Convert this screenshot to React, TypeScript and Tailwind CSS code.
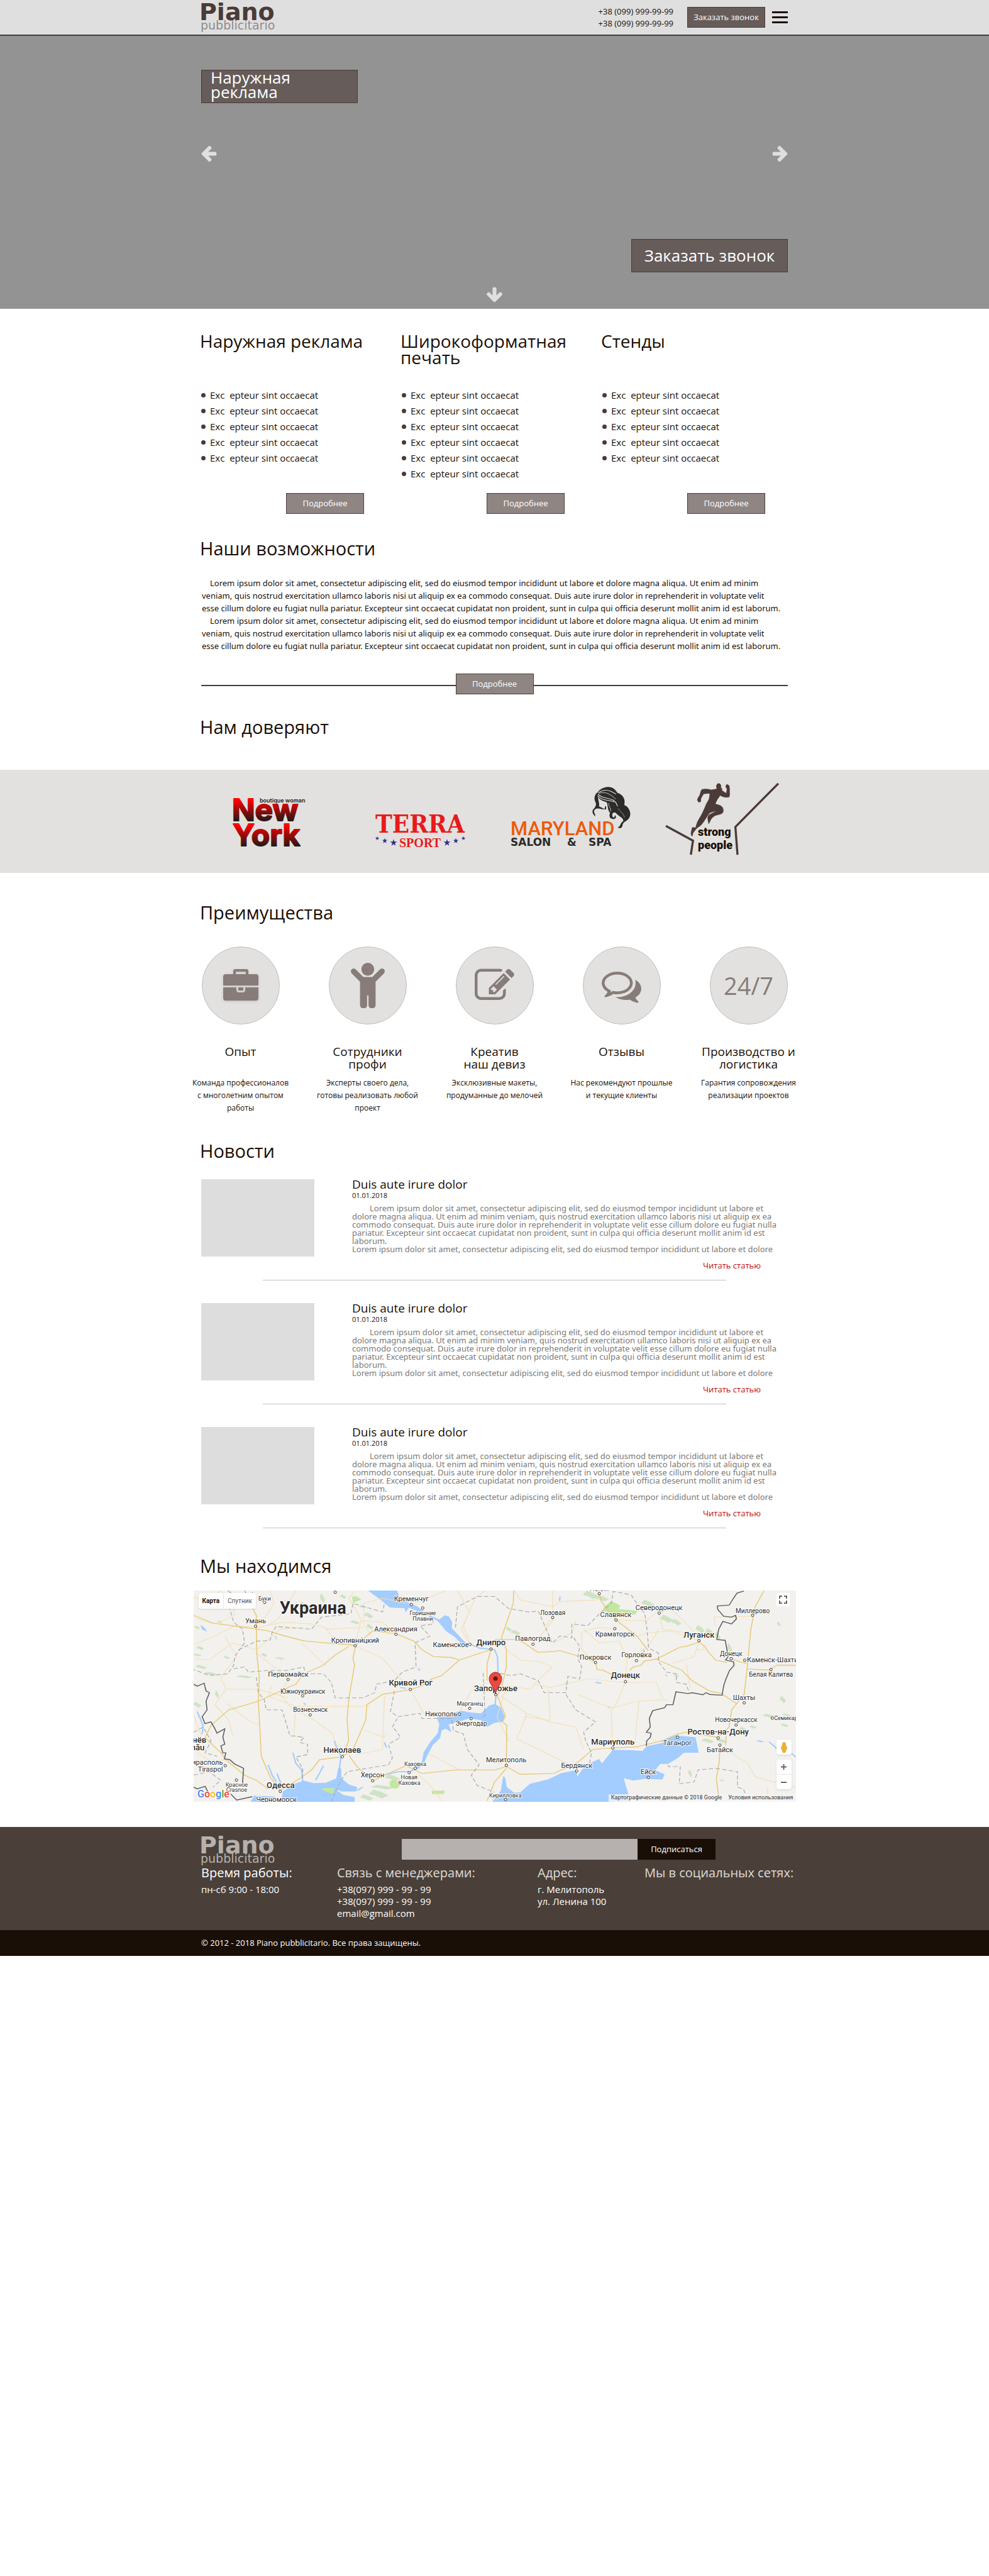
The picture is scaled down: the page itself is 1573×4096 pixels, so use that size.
import React from "react";
import { FaChild } from "react-icons/fa";

const wrap = "mx-auto w-full max-w-[933px]";
const sectionTitle = "-ml-0.5 text-[29px] leading-9";
const darkButton =
  "flex items-center justify-center border border-[#4b3a37] bg-[#665c5a] text-white whitespace-nowrap";

function PianoLogo({ main, sub }: { main: string; sub: string }) {
  return (
    <svg
      width="128"
      height="46"
      viewBox="0 0 128 46"
      role="img"
      aria-label="Piano pubblicitario"
      className="shrink-0 overflow-visible"
      fontFamily='"DejaVu Sans", sans-serif'
    >
      <text x="-3" y="27" fontSize="38" fontWeight="700" fill={main}>
        Piano
      </text>
      <text x="-1" y="42" fontSize="19" fill={sub}>
        pubblicitario
      </text>
    </svg>
  );
}

function Header() {
  return (
    <header className="border-b-2 border-[#4b3a37] bg-[#dfdfdf]">
      <div className={`${wrap} flex h-[55px] items-center justify-between`}>
        <a href="#top">
          <PianoLogo main="#4b3a37" sub="#918b8a" />
        </a>
        <div className="flex items-center">
          <div className="mr-[22px] flex flex-col text-[13px] leading-[19px]">
            <a href="tel:+380999999999">+38 (099) 999-99-99</a>
            <a href="tel:+380999999999">+38 (099) 999-99-99</a>
          </div>
          <button type="button" className={`${darkButton} mr-[11px] h-[33px] w-[124px] text-[13px]`}>
            Заказать звонок
          </button>
          <button type="button" aria-label="Меню" className="flex w-[25px] flex-col gap-[5px]">
            <span className="h-[3px] bg-[#1a0f07]" />
            <span className="h-[3px] bg-[#1a0f07]" />
            <span className="h-[3px] bg-[#1a0f07]" />
          </button>
        </div>
      </div>
    </header>
  );
}

function ArrowIcon({ className = "" }: { className?: string }) {
  return (
    <svg width="25" height="25" viewBox="149 181 1558 1558" fill="currentColor" className={className}>
      <path d="M1664 896v128q0 53-32.500 90.500t-84.500 37.500h-704l293 294q38 36 38 90t-38 90l-75 76q-37 37-90 37-52 0-91-37l-651-652q-37-37-37-90 0-52 37-91l651-650q38-38 91-38 52 0 90 38l75 74q38 38 38 91t-38 91l-293 293h704q52 0 84.500 37.500t32.500 90.500z" />
    </svg>
  );
}

function Hero() {
  return (
    <section className="bg-[#939393] pt-[54px] pb-[10px]">
      <div className={`${wrap} flex flex-col`}>
        <h1 className="h-[53px] w-[249px] border border-[#4b3a37] bg-[#665c5a] pl-[14px] text-[26px] leading-[23px] text-white">
          Наружная
          <br />
          реклама
        </h1>
        <div className="mt-[68px] flex justify-between text-[#dfdfdf]">
          <button type="button" aria-label="Предыдущий слайд">
            <ArrowIcon />
          </button>
          <button type="button" aria-label="Следующий слайд">
            <ArrowIcon className="rotate-180" />
          </button>
        </div>
        <button type="button" className={`${darkButton} mt-[123px] h-[53px] w-[249px] self-end text-[26px]`}>
          Заказать звонок
        </button>
        <a href="#offers" aria-label="Вниз" className="mt-[23px] self-center text-[#dfdfdf]">
          <ArrowIcon className="-rotate-90" />
        </a>
      </div>
    </section>
  );
}

function MoreButton({ className = "" }: { className?: string }) {
  return (
    <button
      type="button"
      className={`h-[33px] w-[124px] shrink-0 border border-[#4b3a37] bg-[#8f8683] text-[13px] text-white ${className}`}
    >
      Подробнее
    </button>
  );
}

const offers = [
  { title: "Наружная реклама", count: 5 },
  { title: "Широкоформатная печать", count: 6 },
  { title: "Стенды", count: 5 },
];

function Offers() {
  return (
    <section id="offers" className={`${wrap} grid grid-cols-[319px_319px_1fr] pt-[38px]`}>
      {offers.map((offer) => (
        <div key={offer.title} className="flex flex-col">
          <h2 className="-ml-0.5 min-h-[87px] w-[290px] text-[28px] leading-[26px]">{offer.title}</h2>
          <ul className="mb-[18px]">
            {Array.from({ length: offer.count }, (_, i) => (
              <li key={i} className="flex items-center text-[15px] leading-[25px] whitespace-pre">
                <span className="mr-[7px] size-[7px] rounded-full bg-[#4b3a37]" />
                Exc{"  "}epteur sint occaecat
              </li>
            ))}
          </ul>
          <MoreButton className="mt-auto ml-[135px]" />
        </div>
      ))}
    </section>
  );
}

function LoremParagraph() {
  return (
    <p className="indent-[13px]">
      Lorem ipsum dolor sit amet, consectetur adipiscing elit, sed do eiusmod tempor incididunt ut labore et dolore
      magna aliqua. Ut enim ad minim
      <br />
      veniam, quis nostrud exercitation ullamco laboris nisi ut aliquip ex ea commodo consequat. Duis aute irure dolor
      in reprehenderit in voluptate velit
      <br />
      esse cillum dolore eu fugiat nulla pariatur. Excepteur sint occaecat cupidatat non proident, sunt in culpa qui
      officia deserunt mollit anim id est laborum.
    </p>
  );
}

function Abilities() {
  return (
    <section className={`${wrap} pt-[37px]`}>
      <h2 className={sectionTitle}>Наши возможности</h2>
      <div className="mt-[27px] pl-px font-['Noto_Sans',sans-serif] text-[13px] leading-5 whitespace-nowrap">
        <LoremParagraph />
        <LoremParagraph />
      </div>
      <div className="mt-[34px] flex items-center">
        <span className="mt-1 h-0.5 flex-1 bg-[#4b3a37]" />
        <MoreButton />
        <span className="mt-1 h-0.5 flex-1 bg-[#4b3a37]" />
      </div>
    </section>
  );
}

const star = "M0-10 2.3-3.1 9.5-3.1 3.7 1.2 5.9 8.1 0 3.9-5.9 8.1-3.7 1.2-9.5-3.1-2.3-3.1Z";

function NewYorkLogo() {
  return (
    <svg
      width="122"
      height="116"
      viewBox="0 0 122 116"
      role="img"
      aria-label="New York boutique woman"
      className="overflow-visible"
    >
      <defs>
        <linearGradient id="ny1" gradientUnits="userSpaceOnUse" x1="0" y1="27" x2="0" y2="61">
          <stop offset="0" stopColor="#ff0000" />
          <stop offset="1" stopColor="#211917" />
        </linearGradient>
        <linearGradient id="ny2" gradientUnits="userSpaceOnUse" x1="0" y1="67" x2="0" y2="101">
          <stop offset="0" stopColor="#ff0000" />
          <stop offset="1" stopColor="#211917" />
        </linearGradient>
      </defs>
      <g fontFamily="Inter, sans-serif" fontWeight="700" fontSize="48" strokeWidth="2" strokeLinejoin="round">
        <text x="0" y="60" fill="url(#ny1)" stroke="url(#ny1)">
          New
        </text>
        <text x="1" y="100" fill="url(#ny2)" stroke="url(#ny2)">
          York
        </text>
      </g>
      <text x="44" y="31" fontFamily="Inter, sans-serif" fontWeight="600" fontSize="9" fill="#211917">
        boutique woman
      </text>
    </svg>
  );
}

const terraStars = [
  [3, 88, 0.35],
  [15, 92, 0.45],
  [29, 95, 0.58],
  [114, 95, 0.58],
  [128, 92, 0.45],
  [140, 88, 0.35],
];

function TerraLogo() {
  return (
    <svg
      width="145"
      height="116"
      viewBox="0 0 145 116"
      role="img"
      aria-label="Terra Sport"
      className="overflow-visible"
    >
      <text
        x="0"
        y="79"
        fontFamily='"DejaVu Serif Condensed", "DejaVu Serif", serif'
        fontWeight="700"
        fontSize="40"
        fill="#e81a1a"
      >
        TERRA
      </text>
      <text x="38" y="102" fontFamily='"Liberation Serif", serif' fontWeight="700" fontSize="20" fill="#e81a1a">
        SPORT
      </text>
      {terraStars.map(([x, y, s]) => (
        <path key={x} d={star} fill="#352b8c" transform={`translate(${x} ${y}) scale(${s})`} />
      ))}
    </svg>
  );
}

function MarylandLogo() {
  return (
    <svg
      width="191"
      height="116"
      viewBox="0 0 191 116"
      role="img"
      aria-label="Maryland Salon & Spa"
      className="overflow-visible"
    >
      <text x="0" y="83" fontFamily="Roboto, sans-serif" fontWeight="500" fontSize="31" fill="#ee5a0a">
        MARYLAND
      </text>
      <g fontFamily='"DejaVu Sans", sans-serif' fontSize="17" fontWeight="700" fill="#2c2b29">
        <text x="0" y="100">
          SALON
        </text>
        <text x="90" y="100">
          &amp;
        </text>
        <text x="124" y="100">
          SPA
        </text>
      </g>
      <g transform="translate(-9 -8.8) scale(.2821 .2731)">
        <path
          fill="#2c2b29"
          d="M520 92C530 70 560 54 585 55c30 2 40 20 50 35 30 10 46 35 38 70 28 10 43 50 28 75-10 20-36 20-38 45-3 17-18 18-27 11 19-6 12-25 31-36 5-20-28-30-43-50-16-4-22 8-17 22 5 12 14 4 13-8 13 9 5 26-12 23-18-2-22-17-15-36-15-16-11-40-18-60-20-11-40-11-51-36 4 30 11 45 6 58l32 16 4-16 5-1v18c-20 5-40-8-56-3-15 5-15 20-7 30l2 15c-15-15-20-25-13-40 13-15 20-25 15-40-10-20-10-40 8-60Z"
        />
        <g fill="none" stroke="#e2e1df" strokeWidth="4" strokeLinecap="round">
          <path d="M528 88c18-14 45-18 68-8 14 6 18 12 30 16" />
          <path d="M526 98c30 36 92 8 108 68" />
          <path d="M524 106c26 34 62 22 92 36" />
          <path d="M532 92c20-6 40-6 60 8 14 10 24 14 32 26" strokeWidth="3" />
          <path d="M586 150c-4 20 14 24 10 46" strokeWidth="3" />
          <path d="M640 182c10 20 28 22 34 50" strokeWidth="2" />
        </g>
      </g>
    </svg>
  );
}

function StrongPeopleLogo() {
  return (
    <svg
      width="182"
      height="116"
      viewBox="0 0 182 116"
      role="img"
      aria-label="Strong people"
      className="overflow-visible"
    >
      <g transform="translate(-256.4 -8.8) scale(.2821 .2731)" fill="#4b3a37" stroke="#4b3a37">
        <ellipse cx="1207" cy="52" rx="14" ry="18" stroke="none" />
        <path
          strokeWidth="3"
          strokeLinejoin="round"
          d="M1194 66c-8 6-22 4-30 7-14-6-38-6-52-3-6 10-8 22-12 34-4 8-12 16-13 28l6 11 11-1c4-8 0-14 3-20 4-10 10-16 14-27l36-3c0 14-2 26-6 38-6 12-14 22-18 36-6 18-14 32-22 50-8 16-20 32-26 50-4 10-4 22-10 27-8 0-16-6-18 2-2 14-6 24-6 36l6 11c4-6 2-14 6-20 6-8 14-20 22-28 8-6 18-12 24-19 12-14 18-26 26-38 8-14 14-22 22-32l34-11c-6 10-28 16-40 26-6 8-6 14-5 24l5 25c4-8 8-16 12-25 8-10 14-16 24-22 14-6 30-6 40-14 8-8 6-22 2-32-10-16-28-16-42-22 4-10 8-18 12-26l16-24c8 6 16 8 24 10 8 2 18 2 26 0 4-10 4-18 3-30 0-12 0-24-2-35-4-6-10-8-14-8l-6 12 8 13-3 27c-10-4-16-12-26-17l-1-14Z"
        />
        <path d="m909 282 153 86-12 82M1543 35l-242 253 12 162" fill="none" strokeWidth="12" />
      </g>
      <g fontFamily="Roboto, sans-serif" fontWeight="900" fontSize="18" fill="#1a0f07">
        <text x="51" y="84">
          strong
        </text>
        <text x="51" y="105">
          people
        </text>
      </g>
    </svg>
  );
}

function Clients() {
  return (
    <section className="pt-[34px]">
      <div className={wrap}>
        <h2 className={sectionTitle}>Нам доверяют</h2>
      </div>
      <div className="mt-[50px] bg-[#e2e1df]">
        <div className={`${wrap} grid h-[164px] grid-cols-[228px_215px_247px_1fr] pt-[21px] pl-[49px]`}>
          <NewYorkLogo />
          <TerraLogo />
          <MarylandLogo />
          <StrongPeopleLogo />
        </div>
      </div>
    </section>
  );
}

function BriefcaseIcon() {
  return (
    <svg width="56" height="52" viewBox="0 0 56 52" fill="currentColor" className="drop-shadow-sm">
      <path d="M16 9V3q0-3 3-3h18q3 0 3 3v6h-4V4H20v5z" />
      <path d="M4 8h48q4 0 4 4v14H0V12q0-4 4-4z" />
      <path d="M0 29h21v4q0 4 4 4h6q4 0 4-4v-4h21v17q0 4-4 4H4q-4 0-4-4z" />
      <path d="M24 29h8v5h-8z" />
    </svg>
  );
}

function PencilIcon() {
  return (
    <svg width="63" height="63" viewBox="0 0 1792 1792" fill="currentColor">
      <path d="M888 1184l116-116-152-152-116 116v56h96v96h56zm440-720q-16-16-33 1l-350 350q-17 17-1 33t33-1l350-350q17-17 1-33zm80 594v190q0 119-84.5 203.5t-203.5 84.5h-832q-119 0-203.500-84.500t-84.500-203.500v-832q0-119 84.500-203.500t203.500-84.500h832q63 0 117 25 15 7 18 23 3 17-9 29l-49 49q-14 14-32 8-23-6-45-6h-832q-66 0-113 47t-47 113v832q0 66 47 113t113 47h832q66 0 113-47t47-113v-126q0-13 9-22l64-64q15-15 35-7t20 29zm-96-738l288 288-672 672h-288v-288zm444 132l-92 92-288-288 92-92q28-28 68-28t68 28l152 152q28 28 28 68t-28 68z" />
    </svg>
  );
}

function CommentsIcon() {
  return (
    <svg width="63" height="63" viewBox="0 0 1792 1792" fill="currentColor">
      <path d="M704 384q-153 0-286 52t-211.500 141-78.500 191q0 82 53 158t149 132l97 56-35 84q34-20 62-39l44-31 53 10q78 14 153 14 153 0 286-52t211.500-141 78.500-191-78.500-191-211.500-141-286-52zm0-128q191 0 353.500 68.500t256.500 186.500 94 257-94 257-256.500 186.500-353.500 68.500q-86 0-176-16-124 88-278 128-36 9-86 16h-3q-11 0-20.500-8t-11.500-21q-1-3-1-6.500t.5-6.500 2-6l2.500-5 3.500-5.500 4-5 4.500-5 4-4.500q5-6 23-25t26-29.500 22.500-29 25-38.500 20.500-44q-124-72-195-177t-71-224q0-139 94-257t256.500-186.500 353.500-68.500zm822 1169q10 24 20.500 44t25 38.500 22.500 29 26 29.500 23 25q1 1 4 4.500t4.500 5 4 5 3.500 5.500l2.500 5 2 6 .5 6.500-1 6.500q-3 14-13 22t-22 7q-50-7-86-16-154-40-278-128-90 16-176 16-271 0-472-132 58 4 88 4 161 0 309-45t264-129q125-92 192-212t67-254q0-77-23-152 129 71 204 178t75 230q0 120-71 224.500t-195 176.500z" />
    </svg>
  );
}

const advantages = [
  { icon: <BriefcaseIcon />, title: ["Опыт"], text: ["Команда профессионалов", "с многолетним опытом", "работы"] },
  {
    icon: <FaChild size={72} />,
    title: ["Сотрудники", "профи"],
    text: ["Эксперты своего дела,", "готовы реализовать любой", "проект"],
  },
  { icon: <PencilIcon />, title: ["Креатив", "наш девиз"], text: ["Эксклюзивные макеты,", "продуманные до мелочей"] },
  { icon: <CommentsIcon />, title: ["Отзывы"], text: ["Нас рекомендуют прошлые", "и текущие клиенты"] },
  {
    icon: <span className="text-[38px]">24/7</span>,
    title: ["Производство и", "логистика"],
    text: ["Гарантия сопровождения", "реализации проектов"],
  },
];

function Advantages() {
  return (
    <section className="pt-[45px]">
      <div className={wrap}>
        <h2 className={sectionTitle}>Преимущества</h2>
      </div>
      <div className="mx-auto mt-9 grid max-w-[1010px] grid-cols-5 text-center whitespace-nowrap">
        {advantages.map((item) => (
          <div key={item.title[0]} className="flex flex-col items-center">
            <div className="flex size-[124px] items-center justify-center rounded-full border border-[#c2bebd] bg-[#e2e1df] text-[#877c79]">
              {item.icon}
            </div>
            <h3 className="mt-[33px] min-h-10 text-[19px] leading-5">
              {item.title.map((line) => (
                <span key={line} className="block">
                  {line}
                </span>
              ))}
            </h3>
            <p className="mt-[10px] min-h-[60px] text-[12px] leading-5">
              {item.text.map((line) => (
                <span key={line} className="block">
                  {line}
                </span>
              ))}
            </p>
          </div>
        ))}
      </div>
    </section>
  );
}

function Article() {
  return (
    <article className="pb-9">
      <div className="flex gap-[60px]">
        <div className="h-[123px] w-[180px] shrink-0 bg-[#dddddd]" />
        <div className="flex-1">
          <h3 className="text-[19px] leading-4">Duis aute irure dolor</h3>
          <time dateTime="2018-01-01" className="mt-[3px] block text-[11px] leading-[14px]">
            01.01.2018
          </time>
          <div className="mt-[7px] font-['Noto_Sans',sans-serif] text-[13px] leading-[13px] whitespace-nowrap text-[#7b7977]">
            <p className="indent-7">
              Lorem ipsum dolor sit amet, consectetur adipiscing elit, sed do eiusmod tempor incididunt ut labore et
              <br />
              dolore magna aliqua. Ut enim ad minim veniam, quis nostrud exercitation ullamco laboris nisi ut aliquip
              ex ea
              <br />
              commodo consequat. Duis aute irure dolor in reprehenderit in voluptate velit esse cillum dolore eu fugiat
              nulla
              <br />
              pariatur. Excepteur sint occaecat cupidatat non proident, sunt in culpa qui officia deserunt mollit anim
              id est
              <br />
              laborum.
            </p>
            <p>
              Lorem ipsum dolor sit amet, consectetur adipiscing elit, sed do eiusmod tempor incididunt ut labore et
              dolore
            </p>
          </div>
          <a href="#article" className="mt-[9px] mr-[43px] block text-right text-[13px] leading-5 text-[#c00c0c]">
            Читать статью
          </a>
        </div>
      </div>
      <hr className="mx-auto mt-[13px] w-[737px] border-[#c4c0bf]" />
    </article>
  );
}

function News() {
  return (
    <section className={`${wrap} pt-10`}>
      <h2 className={`${sectionTitle} mb-[27px]`}>Новости</h2>
      <Article />
      <Article />
      <Article />
    </section>
  );
}

type Place = { n: string; x: number; y: number; s?: number; a?: "start" | "end" };

const places: Place[] = [
  { n: "Буки", x: 402, y: 312, s: 9 },
  { n: "Умань", x: 356, y: 446 },
  { n: "Кременчуг", x: 1146, y: 318 },
  { n: "Горишние", x: 1204, y: 396, s: 9 },
  { n: "Плавни", x: 1204, y: 430, s: 9 },
  { n: "Александрия", x: 1067, y: 492 },
  { n: "Кропивни́цкий", x: 861, y: 558 },
  { n: "Каменское", x: 1346, y: 584 },
  { n: "Днипро", x: 1550, y: 575, s: 13 },
  { n: "Первомайск", x: 522, y: 757 },
  { n: "Южноукраинск", x: 596, y: 855, s: 10 },
  { n: "Кривой Рог", x: 1143, y: 808, s: 13 },
  { n: "Запорожье", x: 1574, y: 840, s: 13 },
  { n: "Марганец", x: 1443, y: 926, s: 9 },
  { n: "Никополь", x: 1298, y: 989 },
  { n: "Энергодар", x: 1450, y: 1043, s: 10 },
  { n: "Вознесенск", x: 634, y: 963, s: 10 },
  { n: "Николаев", x: 796, y: 1200, s: 13 },
  { n: "Каховка", x: 1166, y: 1275, s: 9 },
  { n: "Новая", x: 1135, y: 1355, s: 9 },
  { n: "Каховка", x: 1136, y: 1388, s: 9 },
  { n: "Херсон", x: 949, y: 1342 },
  { n: "Одесса", x: 483, y: 1405, s: 13 },
  { n: "Черноморск", x: 462, y: 1484 },
  { n: "Красное", x: 260, y: 1396, s: 9 },
  { n: "Crasnoe", x: 260, y: 1427, s: 9 },
  { n: "Тирасполь", x: 190, y: 1270, a: "end" },
  { n: "Tiraspol", x: 190, y: 1309, a: "end" },
  { n: "Кишинёв", x: 106, y: 1140, s: 13, a: "end" },
  { n: "Chișinău", x: 97, y: 1186, s: 13, a: "end" },
  { n: "Лозовая", x: 1863, y: 396, s: 10 },
  { n: "Изюм", x: 2099, y: 260 },
  { n: "Северодонецк", x: 2402, y: 370 },
  { n: "Славянск", x: 2183, y: 410 },
  { n: "Краматорск", x: 2178, y: 522 },
  { n: "Павлоград", x: 1762, y: 549 },
  { n: "Луганск", x: 2605, y: 528, s: 13 },
  { n: "Покровск", x: 2080, y: 657 },
  { n: "Горловка", x: 2288, y: 643 },
  { n: "Донецк", x: 2232, y: 765, s: 13 },
  { n: "Донецк", x: 2768, y: 636, s: 10 },
  { n: "Каменск-Шахтинский", x: 2848, y: 674, a: "start" },
  { n: "Миллерово", x: 2877, y: 386, s: 10 },
  { n: "Белая Калитва", x: 2970, y: 755, s: 10 },
  { n: "Шахты", x: 2834, y: 892 },
  { n: "Новочеркасск", x: 2794, y: 1022, s: 10 },
  { n: "Семикаракорск", x: 2986, y: 1009, s: 9, a: "start" },
  { n: "Ростов-на-Дону", x: 2702, y: 1092, s: 13 },
  { n: "Таганрог", x: 2496, y: 1157 },
  { n: "Батайск", x: 2711, y: 1197 },
  { n: "Мариуполь", x: 2168, y: 1152, s: 13 },
  { n: "Бердянск", x: 1985, y: 1288 },
  { n: "Мелитополь", x: 1627, y: 1255 },
  { n: "Ейск", x: 2348, y: 1326 },
  { n: "Кирилловка", x: 1623, y: 1458, s: 9 },
];

const dots = [
  [402, 324], [760, 265], [356, 463], [1146, 336], [1204, 357], [1068, 510], [861, 577], [1443, 569], [1550, 596],
  [521, 773], [595, 868], [1141, 831], [1442, 941], [1390, 975], [1449, 1001], [633, 979], [796, 1223], [1166, 1290],
  [1135, 1315], [950, 1363], [481, 1425], [259, 1359], [202, 1275], [1863, 412], [2099, 273], [2403, 387],
  [2184, 427], [2178, 477], [1763, 568], [2605, 547], [2080, 674], [2288, 663], [2232, 786], [2768, 652],
  [2837, 661], [2877, 399], [2970, 715], [2834, 909], [2793, 1038], [2977, 998], [2702, 1114], [2496, 1110],
  [2711, 1155], [2168, 1172], [1985, 1306], [1628, 1273], [2348, 1343], [1624, 1472], [1574, 861],
];

const greens = [
  [75, 590, 20, 12], [60, 630, 26, 8], [80, 700, 30, 12], [130, 740, 36, 12], [210, 645, 18, 10], [300, 757, 44, 9],
  [130, 350, 24, 14], [230, 300, 20, 12], [300, 320, 18, 10], [60, 470, 16, 10], [175, 438, 14, 8], [600, 345, 24, 26],
  [695, 300, 14, 30], [460, 530, 6, 16], [400, 630, 16, 12], [480, 650, 26, 8], [860, 440, 26, 12], [935, 465, 18, 18],
  [930, 400, 24, 18], [900, 350, 20, 8], [800, 290, 16, 14], [160, 860, 10, 26], [60, 920, 22, 16], [1000, 1400, 60, 14],
  [1050, 1345, 40, 20], [980, 1440, 50, 26], [920, 1460, 34, 18], [2055, 280, 40, 24], [2110, 300, 40, 18],
  [2345, 330, 34, 22], [2440, 420, 34, 24], [2490, 440, 26, 20], [2410, 375, 20, 8], [2610, 480, 24, 24],
  [2660, 500, 24, 26], [2700, 520, 14, 26], [2760, 590, 14, 30], [1640, 480, 16, 14], [1675, 500, 26, 16],
  [2490, 750, 12, 14], [2440, 750, 8, 8], [2150, 935, 10, 8], [2650, 1130, 34, 14], [2720, 1130, 30, 14],
  [2830, 1065, 22, 16], [2880, 1050, 20, 10], [2960, 985, 34, 12], [3050, 980, 26, 8], [3030, 890, 16, 22],
  [3040, 1040, 20, 10], [3010, 450, 10, 14], [1930, 800, 8, 10], [2720, 1360, 14, 6], [2560, 1320, 10, 24],
];

const majorRoads = [
  "M42 400 140 445 300 470 420 490 490 515 600 548 710 560 830 570 861 577 950 490 1068 507 1160 550 1200 600 1260 640 1350 645 1390 660 1480 625 1550 600",
  "M340 355 360 400 362 620 375 760 370 900 380 1100 385 1220 430 1340 480 1420",
  "M861 590 850 650 858 690 830 880 820 1000 828 1130 796 1223",
  "M830 580 760 630 700 690 600 740 560 800 370 900 220 950 130 1040 100 1110 180 1200 205 1240 300 1330 360 1360 420 1410",
  "M1550 600 1530 680 1530 780M1141 831 1200 810 1250 770 1300 750 1390 660",
  "M1141 831 1000 860 920 920 915 1010 850 1180 796 1223 680 1240 640 1300 580 1350 480 1420",
  "M830 1215 870 1280 950 1363 1050 1310 1120 1275 1200 1320 1370 1300 1568 1300 1628 1280 1698 1325 1868 1320 1985 1260 2068 1180 2168 1172 2290 1165 2420 1130 2496 1090 2548 1080 2702 1110 2758 1050 2770 950 2834 860 2848 720 2858 600 2868 480 2890 350 2935 255",
  "M1628 1273 1630 1040 1608 1020 1623 985 1583 870 1608 800 1628 700 1628 600 1603 530 1663 330 1665 255",
  "M1568 540 1668 540 1710 555 1788 615 1868 610 1900 605 2018 645 2080 674 2088 715 2120 720 2163 745",
  "M2099 273 2110 320 2184 427 2290 520 2348 605",
  "M2254 720 2270 700 2310 690 2330 665 2388 655 2508 585 2540 580 2605 555 2635 580 2650 610 2690 660 2748 675",
  "M2388 655 2518 720 2570 780 2658 840 2718 855 2798 915",
  "M2711 1155 2708 1250 2693 1350 2703 1440M2768 650 2810 670 2848 680M2848 712 2960 718 3000 690 3097 690",
  "M2743 1100 2740 1155M1530 1480 1568 1370 1628 1290",
];

const minorRoads = [
  "M42 570 150 520 250 460 362 470 500 440 640 450 710 470 740 520 861 577M430 255 450 330 400 420",
  "M230 255 250 400 150 450 60 420M42 300 140 290 180 255M560 255 500 370 470 420 430 450",
  "M42 650 120 660 240 560 362 600 480 480 600 470M200 520 260 640 180 760 205 830 370 830 520 880",
  "M362 620 450 700 522 773 480 860 540 940 640 1000 740 1080 796 1223M440 810 420 870 560 930 760 930 940 930",
  "M205 830 150 920 220 1010 240 1100M205 910 330 1020 380 1040M560 930 550 1100 600 1110",
  "M861 577 890 430 1000 440 1068 507M905 430 905 330 1000 300 1146 336M710 480 900 470",
  "M861 577 1000 650 1060 730 1141 831 1220 990M710 690 590 560M940 520 830 300 860 255",
  "M1146 336 1250 290 1320 255M1380 255 1440 380 1400 480 1443 569M1440 540 1410 460 1470 300 1520 255",
  "M1010 870 1000 1180 870 1210M915 1070 1010 1110 1020 1080M1390 960 1450 840 1530 790",
  "M1628 600 1700 660 1800 670 1860 700 1770 800 1750 830 1628 810M1668 255 1700 310 1863 350 1900 320 2090 310",
  "M1863 255 1863 430 1800 520 1763 568M1863 412 1820 470M2080 674 2010 600 2010 500 2090 470 2178 477",
  "M1598 870 1720 960 1730 980 1680 1120 1700 1130 1950 1270M1730 970 1850 1020 1980 1050 2020 1180",
  "M1770 800 1850 820 2040 770 2232 790 2390 790 2420 880M1840 830 1850 1010 1720 990M2100 560 2200 550 2240 640 2232 786",
  "M2232 786 2200 880 2160 960 2168 1172M1990 860 2160 940 2290 900 2440 890M2300 900 2280 1140",
  "M2400 480 2360 560 2300 620M2184 427 2340 430 2400 370 2470 370 2560 470 2605 547",
  "M2290 520 2360 500 2460 490 2605 547 2580 640 2470 680M2403 387 2420 480 2540 500M2690 460 2680 410 2877 405",
  "M2590 590 2595 600 2625 600 2628 570M1868 560 1960 500 1980 430M2740 1180 2850 1260 2890 1340 3097 1405",
  "M2950 1400 2960 1485M2100 560 2040 500 2020 480M2540 680 2560 820M1628 810 1580 990 1640 1130",
  "M42 980 80 1100 60 1200 130 1250 205 1240M1228 1200 1390 1300M1300 1480 1250 1400 1180 1325",
];

const regionBorders =
  "M215 255 240 280 225 360 245 440 290 480 300 560 250 640 245 690 215 740 120 750 42 715M300 255 320 300 350 250M270 600 360 550 430 545 440 500 460 465 640 480 690 410 840 390 850 330 1000 380 1010 330M245 710 300 700 320 730 420 720 520 720 600 700 610 740 700 740 740 790 760 880 900 880 960 850 970 800 1060 780 1100 730 1170 700 1165 560 1240 520 1190 460 1256 450 1256 420M360 760 370 850 400 890 410 950 490 950 520 1060 530 1100 600 1110 580 1140 620 1150 620 1210 560 1225 595 1290 595 1360M1060 840 1040 960 1080 990 1190 970 1200 1000 1350 1000 1360 1070 1410 1090 1430 1180 1490 1270 1450 1330 1480 1390 1568 1430M1075 1000 1050 1050 1075 1080 1090 1110 1030 1150 1050 1230 1030 1270 820 1310 790 1360 760 1430 740 1485M1370 470 1380 350 1480 290 1568 290 1640 360 1740 380 1790 375 1830 480 1860 560 1900 520 1960 530 1960 450 2040 460 2110 380 2160 330 2170 260 2260 280 2290 330 2330 390 2340 470 2350 590 2400 620 2400 670 2440 730 2490 740 2490 790 2540 800 2555 850M1970 530 2000 580 1990 650 2010 700 2000 770 1940 755 1930 850 1820 850 1790 780 1700 740 1650 750 1568 730M1510 735 1520 980 1500 1000M1930 860 1980 950 2080 1020 2020 1080 2030 1130 2060 1200 2050 1260M2450 1270 2450 1280 2510 1280 2505 1380 2580 1370 2600 1300 2690 1290 2800 1310 2800 1400 2830 1410 2840 1440M42 1080 90 1050 130 1130 100 1200 160 1220M42 1330 120 1310 180 1360 140 1400";

function MapView() {
  const px = (x: number) => (x - 42) * 0.3136;
  const py = (y: number) => (y - 255) * 0.2731;
  return (
    <svg
      viewBox="0 0 958 336"
      preserveAspectRatio="xMidYMid slice"
      className="block h-auto w-full"
      role="img"
      aria-label="Карта: Запорожье, Украина"
      fontFamily="Roboto, sans-serif"
    >
      <rect width="958" height="336" fill="#f2f1ee" />
      <g transform="translate(-13.17 -69.64) scale(.3136 .2731)">
        <g fill="#cfe3c4">
          {greens.map(([x, y, w, h]) => (
            <path
              key={`${x}-${y}`}
              d={`M${x - w} ${y}L${x - w / 2} ${y - h}L${x + w / 4} ${y - h / 2}L${x + w} ${y + h / 3}L${x + w / 3} ${y + h}L${x - w / 3} ${y + h / 3}Z`}
            />
          ))}
        </g>
        <g fill="#c3e6a0">
          <path d="M845 290h24l24 18-26 10-16 14zM1035 1370q20-30 42 0t-8 38q-38 0-34-38zM2120 355l40-40 46 28-10 20 96 10-10 22-100-4-60-16zM1250 1420h64v20h-64z" />
        </g>
        <g fill="#a3ccff">
          <path d="M925 255h148l12 35 30 20 24 22 34 14 60 48 54 30 28-24 22 6 16 34-2 34 28 34 24 30 28 30-26 4-40-48-42-32-44-60-84-50-62-26-16 26-6-24-74-4-50-48z" />
          <path d="M1275 995 1400 955 1450 965 1500 970 1540 925 1568 915 1600 935 1620 990 1608 1020 1568 1025 1530 1050 1500 1010 1440 1000 1380 1020 1335 1035 1350 1080 1320 1060 1300 1070 1292 1115 1255 1155 1225 1220 1212 1255 1185 1290 1130 1318 1175 1270 1200 1250 1208 1200 1240 1140 1280 1085 1288 1035Z" />
          <path d="M494 1425 545 1385 600 1362 650 1376 712 1375 765 1350 775 1290 790 1290 792 1350 830 1385 872 1400 865 1425 830 1425 790 1425 760 1412 800 1445 858 1458 860 1485 486 1485Z" />
          <path d="M1556 1485 1600 1420 1612 1335 1622 1345 1630 1400 1668 1432 1698 1430 1748 1380 1838 1355 1908 1318 1985 1300 1988 1345 1975 1365 1998 1320 2028 1275 2098 1235 2113 1262 2168 1182 2268 1185 2318 1190 2338 1162 2428 1140 2408 1130 2518 1102 2588 1110 2603 1200 2528 1200 2498 1230 2448 1265 2408 1265 2383 1300 2430 1325 2420 1355 2328 1352 2270 1362 2223 1348 2258 1485Z" />
          <path d="M330 1485 350 1450 450 1455 495 1485zM75 455l12 30 24 8-18-26zM2405 1130l90-36 22 16-80 24z" />
        </g>
        <g fill="none" stroke="#a3ccff" strokeWidth="7">
          <path d="M1430 560 1490 590 1568 600 1583 640 1586 740M1575 870 1570 930M420 1270 440 1330 462 1370M465 1320 486 1385M545 1200 560 1260 590 1300 595 1370M700 1275 680 1320 660 1360M755 1130 770 1180 790 1220 780 1300M1180 710 1190 720M1090 820 1120 825M60 960 90 1040 85 1090M1000 1330 1080 1310 1130 1310M1900 290 1898 315" />
          <path d="M1010 1140 1020 1170M600 910 610 920M2328 600 2323 620M2080 790 2110 795M2960 1135 3000 1175M3060 1190 3097 1225M870 1420 900 1400M2900 1130 2930 1135" />
        </g>
        <path d="M685 1408 755 1402 750 1440 720 1430z" fill="#c3e6a0" />
        <g fill="none">
          {minorRoads.map((d) => (
            <path key={d} d={d} stroke="#f3deb0" strokeWidth="3.500" />
          ))}
          {majorRoads.map((d) => (
            <path key={d} d={d} stroke="#e8ca78" strokeWidth="5" />
          ))}
          <path d={regionBorders} stroke="#a9a9a9" strokeWidth="4" strokeDasharray="22 12" />
          <path
            stroke="#5c5c5c"
            strokeWidth="5"
            d="M2833 258 2798 270 2780 300 2758 340 2698 345 2700 365 2730 405 2770 410 2790 400 2795 420 2770 450 2726 435 2705 480 2695 540 2738 545 2753 640 2740 660 2780 670 2783 690 2760 720 2740 775 2730 810 2722 865 2660 860 2640 850 2625 862 2570 850 2550 855 2488 845 2473 920 2440 920 2430 938 2370 955 2353 1000 2358 1050 2338 1080 2362 1086 2358 1110 2340 1130 2338 1160"
          />
          <path
            stroke="#5c5c5c"
            strokeWidth="5"
            d="M42 800 60 812 95 795 105 840 122 850 105 900 110 950 85 990 100 1030 130 1020 150 1060 160 1085 200 1060 190 1110 200 1150 180 1160 190 1200 205 1200 198 1235 225 1240 250 1265 295 1290 290 1380M42 1400 60 1410 100 1395 120 1440M230 1440 260 1475 340 1455"
          />
        </g>
      </g>
      <g fill="#fff" stroke="#333">
        {dots.map(([x, y]) => (
          <circle key={`${x}-${y}`} cx={px(x)} cy={py(y)} r="2" />
        ))}
      </g>
      <g fill="#2b2b2b" stroke="#fff" strokeWidth="2" strokeLinejoin="round" className="[paint-order:stroke]">
        <text x={px(647)} y={py(390)} fontSize="27" fontWeight="700" textAnchor="middle">
          Украина
        </text>
        {places.map((p) => (
          <text
            key={`${p.n}-${p.y}`}
            x={px(p.x)}
            y={py(p.y)}
            fontSize={p.s ?? 11}
            fontWeight={p.s === 13 ? 500 : 400}
            textAnchor={p.a ?? "middle"}
          >
            {p.n}
          </text>
        ))}
      </g>
      <path
        d="M480 165c-2-12-10-16-10-25a10 10 0 0 1 20 0c0 9-8 13-10 25z"
        fill="#ea4a3f"
        stroke="#a8281f"
      />
      <circle cx="480" cy="140" r="3.500" fill="#6a1510" />
      <text x="6" y="329" fontSize="16" fontWeight="500" className="[paint-order:stroke]" stroke="#fff" strokeWidth="2">
        <tspan fill="#4285f4">G</tspan>
        <tspan fill="#ea4335">o</tspan>
        <tspan fill="#fbbc05">o</tspan>
        <tspan fill="#4285f4">g</tspan>
        <tspan fill="#34a853">l</tspan>
        <tspan fill="#ea4335">e</tspan>
      </text>
    </svg>
  );
}

function MapSection() {
  return (
    <section className="pt-[6px]">
      <div className={wrap}>
        <h2 className={sectionTitle}>Мы находимся</h2>
      </div>
      <div className="relative mx-auto mt-[21px] max-w-[958px] overflow-hidden font-[Roboto,sans-serif]">
        <MapView />
        <div className="absolute top-1 left-2 flex h-[25px] rounded-sm bg-white text-[10px] shadow">
          <button type="button" className="px-[6px] font-bold">
            Карта
          </button>
          <button type="button" className="border-l border-gray-200 px-[6px] text-[#555]">
            Спутник
          </button>
        </div>
        <button
          type="button"
          aria-label="На весь экран"
          className="absolute top-1 right-[10px] flex size-[21px] items-center justify-center bg-white text-[#666]"
        >
          <svg width="13" height="13" viewBox="0 0 13 13" fill="none" stroke="currentColor" strokeWidth="2">
            <path d="M1 5V1h4M8 1h4v4M12 8v4H8M5 12H1V8" />
          </svg>
        </button>
        <div className="absolute right-[7px] bottom-5 flex w-6 flex-col">
          <button
            type="button"
            aria-label="Просмотр улиц"
            className="mb-2 flex h-6 items-center justify-center rounded-sm bg-white shadow"
          >
            <svg width="10" height="17" viewBox="0 0 10 17" fill="#f5b130" stroke="#c98510" strokeWidth=".5">
              <path d="M2 5.500h6L10 11H8.500L7 16.500H3L1.500 11H0z" />
              <circle cx="5" cy="3" r="2.600" />
            </svg>
          </button>
          <button
            type="button"
            aria-label="Увеличить"
            className="flex h-[23px] items-center justify-center rounded-t-sm bg-white shadow"
          >
            <svg width="9" height="9" viewBox="0 0 9 9" fill="#666">
              <path d="M3.500 0h2v3.500H9v2H5.500V9h-2V5.500H0v-2h3.500z" />
            </svg>
          </button>
          <button
            type="button"
            aria-label="Уменьшить"
            className="flex h-6 items-center justify-center rounded-b-sm border-t border-gray-200 bg-white shadow"
          >
            <span className="h-0.5 w-[9px] bg-[#666]" />
          </button>
        </div>
        <div className="absolute right-0 bottom-0 flex h-[12px] items-center gap-[10px] bg-[#f5f5f5]/80 px-1 text-[9px] text-[#333]">
          <span>Картографические данные © 2018 Google</span>
          <a href="#terms">Условия использования</a>
        </div>
      </div>
    </section>
  );
}

function Footer() {
  const heading = "text-[20px] leading-6";
  const list = "mt-[5px] text-[15px] leading-[19px] text-white";
  return (
    <footer className="mt-10">
      <div className="bg-[#4a4039] pt-[15px]">
        <div className={`${wrap} h-[149px] whitespace-nowrap text-[#dedad8]`}>
          <div className="flex h-[46px] items-start">
            <a href="#top" className="w-[319px]">
              <PianoLogo main="#b6b1ae" sub="#b6b1ae" />
            </a>
            <form className="mt-1 flex h-[33px]" onSubmit={(e) => e.preventDefault()}>
              <input
                type="email"
                aria-label="Электронная почта"
                className="w-[375px] bg-[#b6b1ae] px-3 text-[13px] text-[#1a0f07]"
              />
              <button type="submit" className="w-[124px] bg-[#1a0f07] text-[13px] text-white">
                Подписаться
              </button>
            </form>
          </div>
          <div className="grid grid-cols-[216px_319px_170px_1fr]">
            <div>
              <h3 className={`${heading} text-white`}>Время работы:</h3>
              <p className={list}>пн-сб 9:00 - 18:00</p>
            </div>
            <div>
              <h3 className={heading}>Связь с менеджерами:</h3>
              <ul className={list}>
                <li>+38(097) 999 - 99 - 99</li>
                <li>+38(097) 999 - 99 - 99</li>
                <li>
                  <a href="mailto:email@gmail.com">email@gmail.com</a>
                </li>
              </ul>
            </div>
            <div>
              <h3 className={heading}>Адрес:</h3>
              <p className={list}>
                г. Мелитополь
                <br />
                ул. Ленина 100
              </p>
            </div>
            <h3 className={heading}>Мы в социальных сетях:</h3>
          </div>
        </div>
      </div>
      <div className="bg-[#1a0f07]">
        <p className={`${wrap} text-[13px] leading-[41px] text-white`}>
          © 2012 - 2018 Piano pubblicitario. Все права защищены.
        </p>
      </div>
    </footer>
  );
}

export default function App() {
  return (
    <div
      id="top"
      className="min-h-screen overflow-x-hidden bg-white font-['Open_Sans','Noto_Sans',sans-serif] text-[#1a0f07]"
    >
      <Header />
      <main>
        <Hero />
        <Offers />
        <Abilities />
        <Clients />
        <Advantages />
        <News />
        <MapSection />
      </main>
      <Footer />
    </div>
  );
}
